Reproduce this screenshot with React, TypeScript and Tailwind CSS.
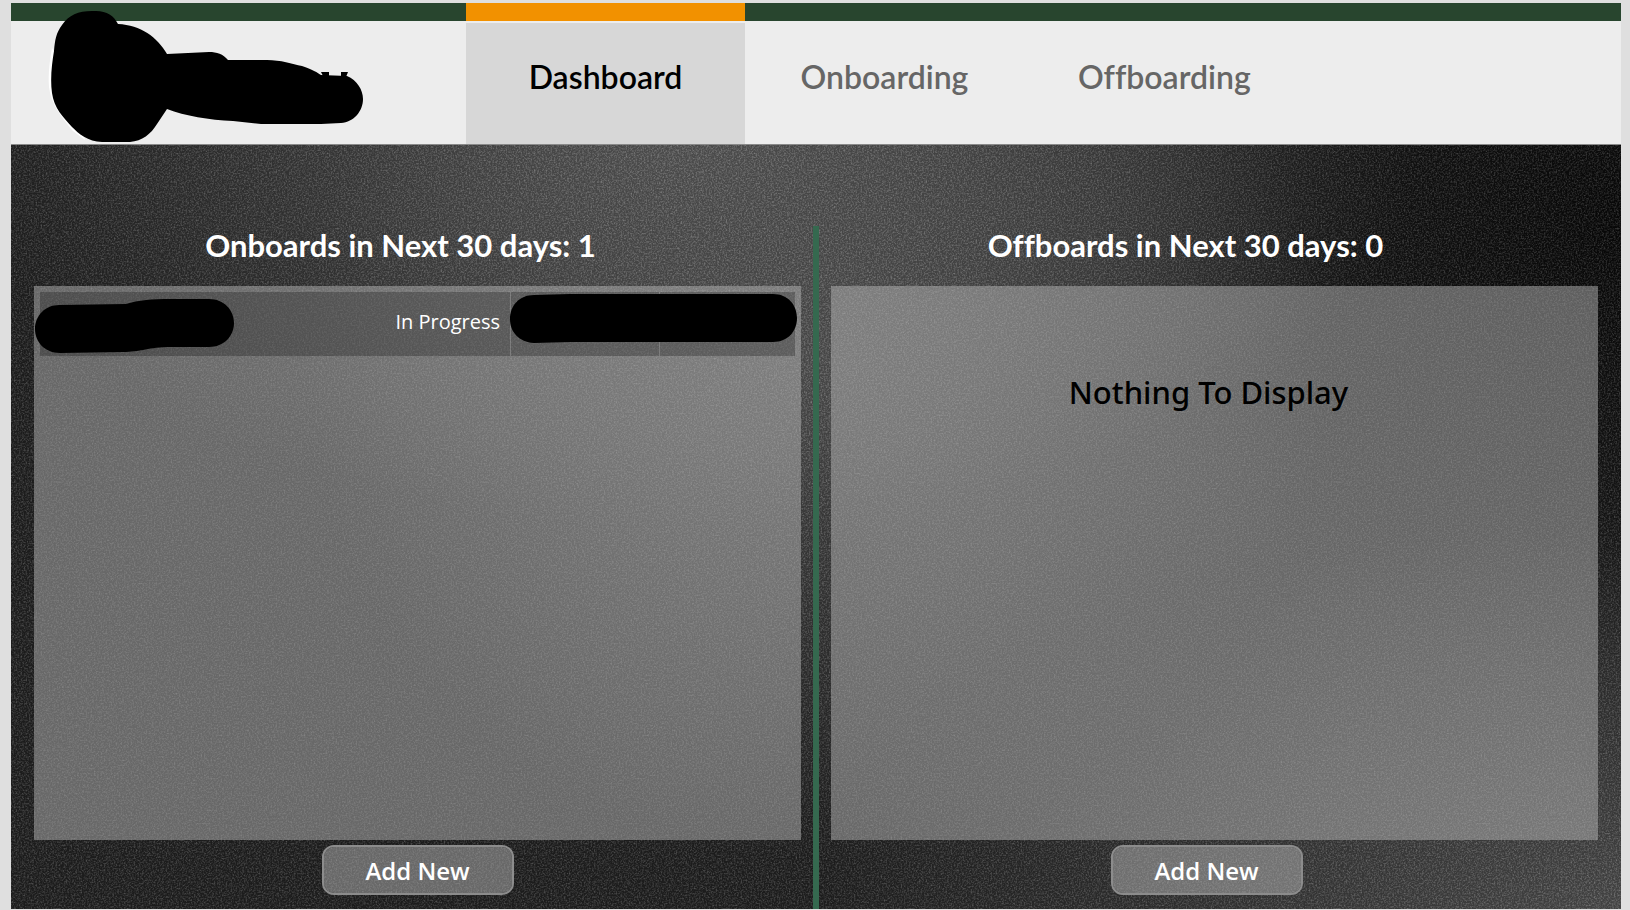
import React from "react";

type Tab = { label: string; active?: boolean };

const tabs: Tab[] = [
  { label: "Dashboard", active: true },
  { label: "Onboarding" },
  { label: "Offboarding" },
];

function Logo() {
  return (
    <svg
      className="absolute left-0 top-0 h-[144px] w-[455px]"
      viewBox="0 0 455 144"
      role="img"
      aria-label="Company"
    >
      <path
        d="M41 45C39 56 37 70 38 84C40 102 52 116 62 128L74 137L66 108L50 60Z"
        fill="#fff"
      />
      <path
        d="M81 8H85C96 8 103 13 107 21C130 22 146 34 156 51L198 49C206 49 212 51 217 57H256C270 57 281 61 291 63C301 66 307 70 310 72L336 73C346 77 352 87 352 96C352 108 343 119 330 120L310 121H250L222 118C198 117 174 113 156 106L146 121C140 131 131 138 119 139H91C77 139 67 130 61 124C52 114 43 105 41 90C39 76 41 60 43 48C44 37 45 30 51 22C58 12 67 8 81 8Z"
        fill="#000"
      />
      <path d="M310 69h8v4h-6zM330 69h7l-2 5h-5z" fill="#000" />
    </svg>
  );
}

function Header() {
  return (
    <header className="relative flex h-[142px] shrink-0 border-b border-[#8a8a8a] bg-[#ededed]">
      <div className="w-[455px] shrink-0 border-t-[18px] border-[#28452e]" />
      <nav className="flex">
        {tabs.map((tab) => (
          <a
            key={tab.label}
            href="#"
            aria-current={tab.active ? "page" : undefined}
            className={
              tab.active
                ? "flex min-w-[279px] flex-col border-t-[18px] border-[#f29100] pt-[2px] text-black"
                : "flex min-w-[279px] flex-col border-t-[18px] border-[#28452e] pt-[2px] text-[#666666]"
            }
          >
            <span
              className={
                tab.active
                  ? "flex flex-1 justify-center bg-[#d7d7d7] px-[54px] pt-[35px] text-[32px] leading-[38px] font-semibold"
                  : "flex flex-1 justify-center px-[54px] pt-[35px] text-[32px] leading-[38px] font-semibold"
              }
            >
              {tab.label}
            </span>
          </a>
        ))}
      </nav>
      <div className="flex-1 border-t-[18px] border-[#28452e]" />
      <Logo />
    </header>
  );
}

function Backdrop() {
  return (
    <div
      aria-hidden="true"
      className="absolute inset-0 -z-10 bg-[#242424] bg-[radial-gradient(ellipse_45%_50%_at_42%_0%,#606060_0%,#60606080_50%,transparent_100%),radial-gradient(ellipse_32%_65%_at_50%_28%,#565656_0%,transparent_100%),radial-gradient(ellipse_50%_50%_at_100%_100%,#545454_0%,transparent_100%),radial-gradient(ellipse_32%_60%_at_100%_10%,#0a0a0a_0%,transparent_100%)]"
    >
      <svg className="h-full w-full opacity-20">
        <filter id="grain" x="0" y="0" width="100%" height="100%" colorInterpolationFilters="sRGB">
          <feTurbulence type="fractalNoise" baseFrequency="0.6" numOctaves="3" seed="4" />
          <feColorMatrix values="2 0 0 0 -0.8  2 0 0 0 -0.8  2 0 0 0 -0.8  0 0 0 0 1" />
        </filter>
        <rect width="100%" height="100%" filter="url(#grain)" />
      </svg>
    </div>
  );
}

function OnboardTable() {
  return (
    <table className="w-full border-separate border-spacing-0 text-xl text-white">
      <tbody>
        <tr className="h-16">
          <td className="relative bg-black/25">
            <svg className="absolute -left-[5px] top-[6px] h-[56px] w-[200px]" viewBox="0 0 200 56" role="img" aria-label="Name">
              <path
                d="M24 7L91 6C103 2 118 1 135 1H174C189 1 199 12 199 25C199 38 189 49 174 49H132C110 50 105 54 88 54L25 55C10 55 0 44 0 31C0 18 10 7 24 7Z"
                fill="#000"
              />
            </svg>
          </td>
          <td className="w-[170px] bg-black/25 pr-[10px] pb-1 text-right">In Progress</td>
          <td className="relative w-[149px] border-l border-white/20 bg-black/25">
            <svg className="absolute -left-px top-[2px] z-10 h-[49px] w-[288px]" viewBox="0 0 288 49" role="img" aria-label="Details">
              <path
                d="M24 1L60 0H263C278 0 287 11 287 24C287 37 278 48 263 48H60L24 49C9 48 0 38 0 25C0 12 9 1 24 1Z"
                fill="#000"
              />
            </svg>
          </td>
          <td className="w-[136px] border-l border-white/20 bg-black/25" />
        </tr>
      </tbody>
    </table>
  );
}

function AddButton() {
  return (
    <button
      type="button"
      className="h-[50px] w-48 rounded-xl border-2 border-[#8c8c8c] bg-[#b4b4b4]/50 bg-clip-padding pt-[2px] text-2xl font-semibold text-white"
    >
      Add New
    </button>
  );
}

export default function App() {
  return (
    <div className="flex min-h-screen flex-col bg-[#dfdfdf] pt-[3px] pr-[9px] pb-px pl-[11px] font-['Lato',sans-serif] [font-variant-ligatures:none]">
      <Header />
      <main className="relative isolate flex flex-1 pt-[81px] pr-[23px] pl-[23px]">
        <Backdrop />
        <section className="flex flex-1 flex-col">
          <h2 className="pr-[34px] text-center text-[31px] leading-[38px] font-bold text-white">
            Onboards in Next 30 days: 1
          </h2>
          <div className="mt-[22px] min-h-80 flex-1 bg-[#b4b4b4]/50 px-[6px] pt-[6px] font-['Open_Sans',sans-serif]">
            <OnboardTable />
          </div>
          <div className="flex justify-center pt-[5px] pb-[14px] font-['Open_Sans',sans-serif]">
            <AddButton />
          </div>
        </section>
        <div className="mr-3 ml-3 w-[6px] bg-[#35694f]" />
        <section className="flex flex-1 flex-col">
          <h2 className="pr-[58px] text-center text-[31px] leading-[38px] font-bold text-white">
            Offboards in Next 30 days: 0
          </h2>
          <div className="mt-[22px] min-h-80 flex-1 bg-[#b4b4b4]/50 pt-[85px] pr-3 text-center font-['Noto_Sans','Open_Sans',sans-serif] text-[31px] leading-[42px] font-medium text-black">
            Nothing To Display
          </div>
          <div className="flex justify-center pt-[5px] pr-4 pb-[14px] font-['Open_Sans',sans-serif]">
            <AddButton />
          </div>
        </section>
      </main>
    </div>
  );
}
